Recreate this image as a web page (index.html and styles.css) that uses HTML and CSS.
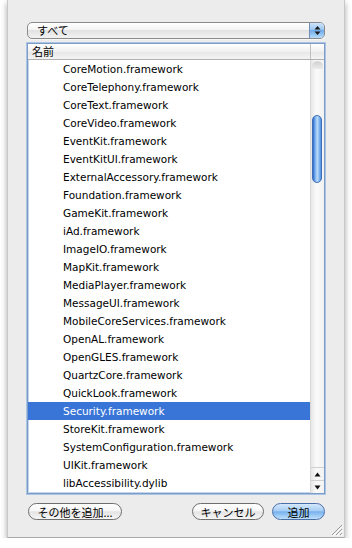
FILE: index.html
```html
<!DOCTYPE html>
<html lang="ja">
<head>
  <meta charset="UTF-8" />
  <title>フレームワークを追加</title>
  <link rel="stylesheet" href="styles.css">
</head>
<body>

  <div class="sheet">
    <div class="popup">
      <span class="popup-label">すべて</span>
      <span class="stepper">
        <svg width="7" height="11" viewBox="0 0 7 11"><path d="M3.5 1 L6.5 4.5 L0.5 4.5 Z M3.5 10 L6.5 6.5 L0.5 6.5 Z" fill="#1a1a1a"/></svg>
      </span>
    </div>

    <div class="table">
      <div class="table-head">
        <span class="col-name">名前</span>
        <span class="col-corner"></span>
      </div>
      <div class="table-body">
        <ul class="rows">
          <li>CoreMotion.framework</li>
          <li>CoreTelephony.framework</li>
          <li>CoreText.framework</li>
          <li>CoreVideo.framework</li>
          <li>EventKit.framework</li>
          <li>EventKitUI.framework</li>
          <li>ExternalAccessory.framework</li>
          <li>Foundation.framework</li>
          <li>GameKit.framework</li>
          <li>iAd.framework</li>
          <li>ImageIO.framework</li>
          <li>MapKit.framework</li>
          <li>MediaPlayer.framework</li>
          <li>MessageUI.framework</li>
          <li>MobileCoreServices.framework</li>
          <li>OpenAL.framework</li>
          <li>OpenGLES.framework</li>
          <li>QuartzCore.framework</li>
          <li>QuickLook.framework</li>
          <li class="selected">Security.framework</li>
          <li>StoreKit.framework</li>
          <li>SystemConfiguration.framework</li>
          <li>UIKit.framework</li>
          <li>libAccessibility.dylib</li>
        </ul>
        <div class="scrollbar">
          <div class="track">
            <div class="track-cap"></div>
            <div class="thumb"></div>
          </div>
          <div class="arrow arrow-up">
            <svg width="7" height="5" viewBox="0 0 7 5"><path d="M3.5 0.5 L6.5 4.5 L0.5 4.5 Z" fill="#111"/></svg>
          </div>
          <div class="arrow arrow-down">
            <svg width="7" height="5" viewBox="0 0 7 5"><path d="M3.5 4.5 L6.5 0.5 L0.5 0.5 Z" fill="#111"/></svg>
          </div>
        </div>
      </div>
    </div>

    <div class="buttons">
      <button class="btn btn-other">その他を追加...</button>
      <span class="spacer"></span>
      <button class="btn btn-cancel">キャンセル</button>
      <button class="btn btn-default">追加</button>
    </div>

    <svg class="grip" width="12" height="12" viewBox="0 0 12 12">
      <path d="M11 1 L1 11 M11 5 L5 11 M11 9 L9 11" stroke="#9a9a9a" stroke-width="1"/>
      <path d="M12 2 L2 12 M12 6 L6 12 M12 10 L10 12" stroke="#fff" stroke-width="1"/>
    </svg>
  </div>

</body>
</html>
```

FILE: styles.css
```css
body {
  margin: 0;
  background: white;
  font-family: "DejaVu Sans", "Noto Sans CJK JP", sans-serif;
  font-size: 11px;
  color: black;
}

.sheet {
  position: relative;
  width: 338px;
  height: 538px;
  margin-left: 7px;
  background: #ececec;
  border-left: 1px solid #c8c8c8;
  border-right: 1px solid #c8c8c8;
  border-bottom: 1px solid #a8a8a8;
  box-sizing: border-box;
  box-shadow: 0 3px 6px rgba(0, 0, 0, 0.35);
  padding: 22px 19px 0 19px;
  display: flex;
  flex-direction: column;
}

/* popup menu */
.popup {
  height: 17px;
  box-sizing: border-box;
  border: 1px solid #8a8a8a;
  border-radius: 5px;
  background: linear-gradient(#ffffff, #f4f4f4 45%, #e2e2e2 50%, #f2f2f2);
  display: flex;
  align-items: center;
  overflow: hidden;
  box-shadow: 0 1px 0 rgba(255, 255, 255, 0.6);
}

.popup-label {
  flex: 1;
  padding-left: 9px;
  font-family: "Noto Sans CJK JP", sans-serif;
  font-size: 11px;
  line-height: 15px;
}

.stepper {
  width: 14px;
  height: 100%;
  border-left: 1px solid #6f8fb9;
  background: linear-gradient(#cfe4fb, #9cc7f2 45%, #6fabea 50%, #b7dcfb);
  display: flex;
  align-items: center;
  justify-content: center;
}

/* table */
.table {
  margin-top: 4px;
  height: 451px;
  box-sizing: border-box;
  border: 1px solid #7d9cc4;
  box-shadow: 0 0 0 1px #a9c4e6, inset 0 0 0 1px #c3d6ee;
  background: white;
  display: flex;
  flex-direction: column;
}

.table-head {
  height: 15px;
  display: flex;
  border-bottom: 1px solid #b0b0b0;
  background: linear-gradient(#ffffff, #f0f0f0 50%, #e6e6e6 51%, #f4f4f4);
}

.col-name {
  flex: 1;
  padding-left: 4px;
  font-family: "Noto Sans CJK JP", sans-serif;
  font-size: 11px;
  line-height: 15px;
  border-right: 1px solid #c0c0c0;
}

.col-corner {
  width: 13px;
}

.table-body {
  flex: 1;
  display: flex;
  overflow: hidden;
}

.rows {
  flex: 1;
  list-style: none;
  margin: 0;
  padding: 0;
}

.rows li {
  height: 18px;
  line-height: 18px;
  padding-left: 35px;
  font-family: "DejaVu Sans", sans-serif;
  font-size: 10.5px;
  white-space: nowrap;
}

.rows li.selected {
  background: #3875d7;
  color: white;
}

/* scrollbar */
.scrollbar {
  width: 13px;
  display: flex;
  flex-direction: column;
  border-left: 1px solid #d8d8d8;
  background: linear-gradient(to right, #e6e6e6, #fafafa 40%, #f2f2f2);
}

.track {
  position: relative;
  flex: 1;
}

.track-cap {
  height: 8px;
  margin: 1px 1px 0;
  border-radius: 6px 6px 0 0;
  background: linear-gradient(#cfcfcf, #ececec);
}

.thumb {
  position: absolute;
  top: 55px;
  left: 1px;
  width: 10px;
  height: 68px;
  box-sizing: border-box;
  border: 1px solid #3f6fb6;
  border-radius: 5px;
  background: linear-gradient(to right, #2c6bd0, #8ebef3 35%, #b8d9fb 55%, #4d8fe0);
}

.arrow {
  height: 12px;
  display: flex;
  align-items: center;
  justify-content: center;
  border-top: 1px solid #d0d0d0;
}

/* buttons */
.buttons {
  display: flex;
  align-items: center;
  gap: 8px;
  margin-top: 9px;
}

.spacer {
  flex: 1;
}

.btn {
  height: 17px;
  box-sizing: border-box;
  border: 1px solid #6e6e6e;
  border-radius: 9px;
  padding: 0;
  font-family: "Noto Sans CJK JP", sans-serif;
  font-size: 11px;
  line-height: 14px;
  white-space: nowrap;
  color: black;
  background: linear-gradient(#ffffff, #f6f6f6 45%, #e4e4e4 52%, #f6f6f6);
}

.btn-other {
  width: 94px;
  margin-left: 1px;
}

.btn-cancel {
  width: 72px;
}

.btn-default {
  width: 53px;
  border-color: #4a6fa8;
  background: linear-gradient(#d5e8fc, #a6cdf4 45%, #78b1ed 52%, #bfe0fc);
}

.grip {
  position: absolute;
  right: 1px;
  bottom: 1px;
}
```
